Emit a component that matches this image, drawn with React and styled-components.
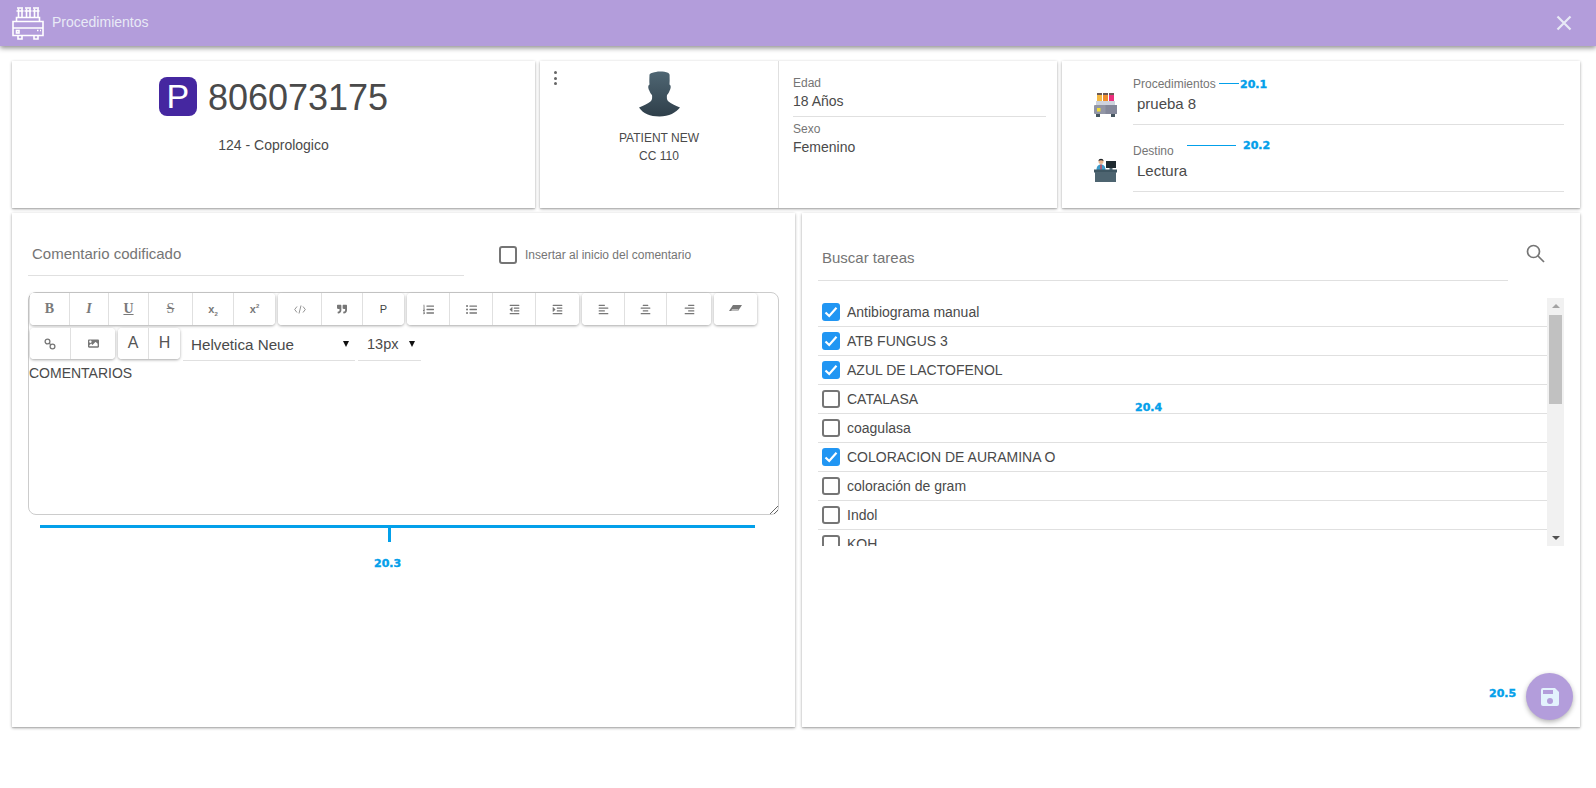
import React from 'react';
import styled, { createGlobalStyle } from 'styled-components';
import { FaQuoteRight, FaListOl, FaListUl, FaOutdent, FaIndent, FaAlignLeft, FaAlignCenter, FaAlignRight, FaImage } from 'react-icons/fa';

const Global = createGlobalStyle`
  html, body { margin: 0; padding: 0; background: #fff; overflow: hidden; }
  body { font-family: "Liberation Sans", Arial, sans-serif; color: #4a4a4a; }
  * { box-sizing: border-box; }
`;

const Page = styled.div`position: relative; width: 1596px; height: 788px; overflow: hidden;`;

const TopBar = styled.header`
  height: 46px; background: #b39ddb; display: flex; align-items: center;
  padding: 0 24px 0 12px; gap: 8px; color: #e8eaf6; font-size: 14px;
  box-shadow: 0 2px 5px rgba(0,0,0,.45);
  position: relative;
`;
const TopTitle = styled.div`flex: 1; margin-top: -3px;`;

const TopRow = styled.div`display: flex; gap: 5px; padding: 15px 16px 0 12px; height: 162px;`;
const BottomRow = styled.div`display: flex; gap: 7px; padding: 5px 16px 0 12px; height: 519px;`;

const Card = styled.section`
  background: #fff;
  box-shadow: 0 1px 3px rgba(0,0,0,.32), 0 1px 1px rgba(0,0,0,.1);
  width: ${p => p.$w ? p.$w + 'px' : 'auto'};
  flex: ${p => p.$w ? 'none' : '1'};
  position: relative;
`;

const OrderCard = styled(Card)`display: flex; flex-direction: column; align-items: center; padding-top: 11px;`;
const OrderLine = styled.div`display: flex; align-items: center; gap: 11px;`;
const Badge = styled.div`
  width: 38px; height: 39px; border-radius: 8px; background: #4527a0; color: #fff;
  display: flex; align-items: center; justify-content: center; font-size: 34px; line-height: 1;
`;
const OrderNo = styled.div`font-size: 36px; line-height: 44px; margin-top: 4px; color: #4a4a4a;`;
const OrderName = styled.div`font-size: 14px; line-height: 18px; margin-top: 16px; color: #4a4a4a;`;

const PatientCard = styled(Card)`display: flex;`;
const PatientLeft = styled.div`
  width: 239px; border-right: 1px solid #e0e0e0; display: flex; flex-direction: column;
  align-items: center; padding-top: 10px; position: relative;
`;
const MoreDots = styled.div`
  position: absolute; left: 14px; top: 10px; width: 4px; display: flex; flex-direction: column; gap: 2.5px;
  span { width: 3px; height: 3px; border-radius: 50%; background: #666; display: block; }
`;
const PatientName = styled.div`font-size: 12px; line-height: 18px; margin-top: 11px; color: #4a4a4a;`;
const PatientId = styled.div`font-size: 12px; line-height: 18px; color: #4a4a4a;`;
const PatientRight = styled.div`flex: 1; padding: 15px 11px 0 14px;`;
const Label = styled.div`font-size: 12px; line-height: 14px; color: #757575;`;
const Value = styled.div`
  font-size: ${p => p.$size ?? 14}px; line-height: 20px; color: #4a4a4a;
  margin-top: ${p => p.$mt ?? 1}px; padding-left: ${p => p.$pl ?? 0}px;
`;
const Info = styled.div`
  padding-top: ${p => p.$pt ?? 0}px; padding-bottom: ${p => p.$pb ?? 0}px;
  border-bottom: ${p => p.$line ? '1px solid #e0e0e0' : 'none'};
`;

const ProcCard = styled(Card)`padding-left: 32px; padding-right: 16px;`;
const ProcRow = styled.div`display: flex; gap: 15px;`;
const ProcIcon = styled.div`width: 24px; align-self: flex-end; padding-bottom: ${p => p.$pb}px; line-height: 0;`;
const ProcText = styled.div`
  flex: 1; border-bottom: 1px solid #e0e0e0; padding-top: ${p => p.$pt}px; padding-bottom: 10px;
`;

const LeftPanel = styled(Card)`padding: 0 16px;`;
const LeftHeader = styled.div`display: flex; height: 63px;`;
const Field = styled.div`
  width: 436px; border-bottom: 1px solid #e0e0e0; color: #757575; font-size: 15px; line-height: 20px;
  display: flex; align-items: flex-end; padding: 0 0 11px 4px;
`;
const CheckLabel = styled.label`
  display: flex; align-items: center; gap: 8px; font-size: 12px; color: #757575;
  align-self: flex-end; margin: 0 0 12px 35px;
`;
const Box = styled.span`
  width: 18px; height: 18px; border-radius: 3px; flex: none; display: flex; align-items: center; justify-content: center;
  background: ${p => p.$on ? '#2196f3' : 'transparent'};
  border: ${p => p.$on ? 'none' : '2px solid #757575'};
`;

const Editor = styled.div`
  margin-top: 16px; height: 223px; width: 751px; border: 1px solid #ccc; border-radius: 8px;
  position: relative; padding: 0 1px;
`;
const ToolRow = styled.div`display: flex; gap: 3px; height: ${p => p.$h}px; margin-bottom: 3px;`;
const Group = styled.div`
  display: flex; background: #fff; border-radius: 4px; box-shadow: 0 1px 3px rgba(0,0,0,.35); overflow: hidden;
`;
const Tool = styled.button`
  width: ${p => p.$w}px; height: 100%; border: 0; padding: 0; background: #fff; color: #777; font-size: 12px;
  border-right: 1px solid #e0e0e0; display: flex; align-items: center; justify-content: center;
  &:last-child { border-right: 0; }
`;
const SerifGlyph = styled.span`
  font-family: "Liberation Serif", serif; font-size: 14px; color: #7a7a7a;
  font-weight: ${p => p.$bold ? 700 : 400}; font-style: ${p => p.$italic ? 'italic' : 'normal'};
  text-decoration: ${p => p.$deco || 'none'};
`;
const SmallX = styled.span`
  font-size: 11px; font-weight: 700; color: #777; font-family: "Liberation Sans", sans-serif;
  sub, sup { font-size: 6px; line-height: 0; }
`;
const LetterTool = styled(Tool)`font-size: 16px; color: #555; padding-bottom: 2px;`;
const PTool = styled(Tool)`font-size: 11px; font-family: "Liberation Sans", sans-serif; color: #444;`;
const Select = styled.div`
  width: ${p => p.$w}px; height: 33px; border-bottom: 1px solid #e0e0e0; display: flex; align-items: center;
  justify-content: space-between; font-size: ${p => p.$size}px; color: #4a4a4a; padding: 0 ${p => p.$pr}px 0 ${p => p.$pl}px;
`;
const Caret = styled.span`width: 0; height: 0; border-left: 3px solid transparent; border-right: 3px solid transparent; border-top: 6px solid #111; display: block;`;
const EditorText = styled.div`font-size: 14px; line-height: 18px; color: #4a4a4a; margin: 5px 0 0 -1px;`;
const Grip = styled.svg`position: absolute; right: 0; bottom: 0;`;

const RightPanel = styled(Card)`padding: 0 16px;`;
const SearchRow = styled.div`display: flex; height: 68px; position: relative;`;
const SearchField = styled.div`
  width: 690px; border-bottom: 1px solid #e0e0e0; font-size: 15px; color: #757575; line-height: 20px;
  display: flex; align-items: flex-end; padding: 0 0 12px 4px;
`;
const SearchBtn = styled.div`margin: 31px 0 0 18px; line-height: 0;`;
const ListWrap = styled.div`display: flex; height: 248px; margin-top: 17px; width: 746px;`;
const List = styled.div`flex: 1; overflow: hidden;`;
const Row = styled.div`
  height: 29px; border-bottom: 1px solid #e0e0e0; display: flex; align-items: center; gap: 7px; padding: 0 0 0 4px;
  font-size: 14px; color: #4a4a4a;
`;
const ScrollTrack = styled.div`
  width: 17px; background: #f1f1f1; display: flex; flex-direction: column; align-items: center; padding: 6px 0;
`;
const Thumb = styled.div`width: 13px; height: 89px; background: #c1c1c1; margin-top: 7px;`;
const ArrowUp = styled.span`width: 0; height: 0; border-left: 4px solid transparent; border-right: 4px solid transparent; border-bottom: 4px solid #a3a3a3;`;
const ArrowDown = styled.span`width: 0; height: 0; border-left: 4px solid transparent; border-right: 4px solid transparent; border-top: 4px solid #505050; margin-top: auto;`;

const Fab = styled.button`
  position: absolute; left: 1526px; top: 673px; width: 47px; height: 47px; border-radius: 50%; border: 0; padding: 0;
  background: #b39ddb; box-shadow: 0 2px 5px rgba(0,0,0,.3); display: flex; align-items: center; justify-content: center;
`;

const Note = styled.div`
  position: absolute; left: ${p => p.$x}px; top: ${p => p.$y}px; color: #03a0ea;
  font-family: "DejaVu Sans", sans-serif; font-weight: 700; font-size: 11px; line-height: 13px;
  -webkit-text-stroke: .4px #03a0ea;
`;
const Stroke = styled.div`
  position: absolute; left: ${p => p.$x}px; top: ${p => p.$y}px; width: ${p => p.$w}px; height: ${p => p.$h}px; background: #03a0ea;
`;

const Analyzer = () => (
  <svg width="32" height="33" viewBox="0 0 32 33" fill="none" stroke="#fff" strokeWidth="1.6">
    <path d="M1 14.500h30v14H1zM4.500 14.500v-4h23v4" />
    <path d="M1 21h30M6 28.500v3.500h4v-3.500M22 28.500v3.500h4v-3.500" />
    <rect x="4.500" y="23.500" width="2.500" height="2.500" />
    <path d="M25 23.500h1.500M28 23.500h1" />
    <path d="M6.500 10.500V1.500M10 10.500V1.500M14.500 10.500V1.500M18 10.500V1.500M22.500 10.500V1.500M26 10.500V1.500" />
    <path d="M4.500 4h7M12.500 4h7M20.500 4h7M5 1h6M13 1h6M21 1h6" />
  </svg>
);

const Avatar = () => (
  <svg width="41" height="47" viewBox="0 0 41 47">
    <defs><linearGradient id="av" x1="0" y1="0" x2="0" y2="1"><stop offset="0" stopColor="#4f6673" /><stop offset="1" stopColor="#2f3f4a" /></linearGradient></defs>
    <path fill="url(#av)" d="M10.500 3.500C12 1.500 15 1.500 17 1c3-.8 9-.5 12 .8 1.500.7 1.800 2 1.600 4 0 2.500.2 5-.1 7.700 1.800.8 1.400 4 .2 6-.8 2.200-1.800 3.500-2.700 4.500-.3 2.500-.3 5 1.500 6.500 2.500 2 6.500 4 11.500 6-4 5-11 9-20.500 9S4 42.500 0 36.500c5-2 9-4 11.500-6 1.800-1.500 1.800-4 1.500-6.500-1-1-1.900-2.300-2.700-4.500-1.200-2-1.600-5.200.2-6-.3-2.700-.1-6.700 0-10z" />
  </svg>
);

const ProcMachine = () => (
  <svg width="23" height="24" viewBox="0 0 23 24">
    <rect x="3" y="1" width="5" height="8" fill="#f4b942" /><rect x="9" y="1" width="5" height="8" fill="#ef8e2b" /><rect x="15" y="1" width="5" height="8" fill="#ec2f7d" />
    <rect x="3" y="0" width="5" height="2" fill="#6d5a55" /><rect x="9" y="0" width="5" height="2" fill="#6d5a55" /><rect x="15" y="0" width="5" height="2" fill="#6d5a55" />
    <rect x="2" y="8" width="19" height="5" fill="#ced3de" />
    <rect x="0" y="12" width="23" height="9" rx="1" fill="#9296a6" /><rect x="11.500" y="12" width="11.500" height="9" fill="#84889a" />
    <rect x="3" y="15" width="3.500" height="3.500" fill="#f2dd3a" />
    <rect x="2" y="21" width="4" height="3" fill="#46555f" /><rect x="17" y="21" width="4" height="3" fill="#46555f" />
  </svg>
);

const ReceptionDesk = () => (
  <svg width="23" height="24" viewBox="0 0 23 24">
    <circle cx="7" cy="3.500" r="2.500" fill="#e9b48e" /><path d="M4.500 3c0-3 5-3 5 0-1.500-1-3.500-1-5 0z" fill="#1f2429" />
    <path d="M2.500 12c0-4 2-5.500 4.500-5.500S11.500 8 11.500 12z" fill="#3d9bca" /><rect x="6.300" y="6.500" width="1.400" height="5" fill="#d8414f" />
    <rect x="12" y="3" width="10" height="7" fill="#1f2a30" /><rect x="15.500" y="10" width="3" height="2" fill="#4d6470" />
    <rect x="0" y="11.500" width="23" height="3" fill="#3e5662" /><rect x="1" y="14" width="21" height="10" fill="#4d6470" />
  </svg>
);

const CheckMark = () => (
  <svg width="14" height="12" viewBox="0 0 14 12" fill="none" stroke="#fff" strokeWidth="2.200"><path d="M1.500 6.500l3.700 3.500L12.500 1.800" /></svg>
);

const CodeIcon = () => (
  <svg width="12" height="9" viewBox="0 0 12 9" fill="none" stroke="#888" strokeWidth=".9"><path d="M3 1.500L.7 4.500 3 7.500M9 1.500l2.300 3L9 7.500M7 .5L5 8.500" /></svg>
);
const LinkIcon = () => (
  <svg width="12" height="12" viewBox="0 0 12 12" fill="none" stroke="#777" strokeWidth="1.300"><circle cx="3.500" cy="3.500" r="2.400" /><circle cx="8.500" cy="8.500" r="2.400" /><path d="M5 5l2 2" /></svg>
);
const EraserIcon = () => (
  <svg width="13" height="8" viewBox="0 0 13 8"><path fill="#777" d="M4 0h9L9 6H0z" /><path fill="#fff" d="M3 4.500h6.500L9 5.500H2.200z" /></svg>
);

const tasks = [
  ['Antibiograma manual', true], ['ATB FUNGUS 3', true], ['AZUL DE LACTOFENOL', true], ['CATALASA', false],
  ['coagulasa', false], ['COLORACION DE AURAMINA O', true], ['coloración de gram', false], ['Indol', false], ['KOH', false],
];

export default function App() {
  return (
    <Page>
      <Global />
      <TopBar>
        <Analyzer />
        <TopTitle>Procedimientos</TopTitle>
        <svg width="16" height="16" viewBox="0 0 16 16" stroke="#e8eaf6" strokeWidth="2.200"><path d="M1.500 1.500l13 13M14.500 1.500l-13 13" /></svg>
      </TopBar>

      <TopRow>
        <OrderCard $w={523}>
          <OrderLine>
            <Badge>P</Badge>
            <OrderNo>806073175</OrderNo>
          </OrderLine>
          <OrderName>124 - Coprologico</OrderName>
        </OrderCard>

        <PatientCard $w={517}>
          <PatientLeft>
            <MoreDots><span /><span /><span /></MoreDots>
            <Avatar />
            <PatientName>PATIENT NEW</PatientName>
            <PatientId>CC 110</PatientId>
          </PatientLeft>
          <PatientRight>
            <Info $line $pb={5}>
              <Label>Edad</Label>
              <Value>18 Años</Value>
            </Info>
            <Info $pt={5}>
              <Label>Sexo</Label>
              <Value>Femenino</Value>
            </Info>
          </PatientRight>
        </PatientCard>

        <ProcCard>
          <ProcRow>
            <ProcIcon $pb={8}><ProcMachine /></ProcIcon>
            <ProcText $pt={16}>
              <Label>Procedimientos</Label>
              <Value $mt={3} $pl={4} $size={15}>prueba 8</Value>
            </ProcText>
          </ProcRow>
          <ProcRow>
            <ProcIcon $pb={10}><ReceptionDesk /></ProcIcon>
            <ProcText $pt={19}>
              <Label>Destino</Label>
              <Value $mt={3} $pl={4} $size={15}>Lectura</Value>
            </ProcText>
          </ProcRow>
        </ProcCard>
      </TopRow>

      <BottomRow>
        <LeftPanel $w={783}>
          <LeftHeader>
            <Field>Comentario codificado</Field>
            <CheckLabel><Box />Insertar al inicio del comentario</CheckLabel>
          </LeftHeader>
          <Editor>
            <ToolRow $h={32}>
              <Group>
                <Tool $w={40}><SerifGlyph $bold>B</SerifGlyph></Tool>
                <Tool $w={39}><SerifGlyph $italic $bold>I</SerifGlyph></Tool>
                <Tool $w={40}><SerifGlyph $bold $deco="underline">U</SerifGlyph></Tool>
                <Tool $w={44}><SerifGlyph $deco="line-through">S</SerifGlyph></Tool>
                <Tool $w={41}><SmallX>x<sub>2</sub></SmallX></Tool>
                <Tool $w={41}><SmallX>x<sup>2</sup></SmallX></Tool>
              </Group>
              <Group>
                <Tool $w={44}><CodeIcon /></Tool>
                <Tool $w={41}><FaQuoteRight size={10} /></Tool>
                <PTool $w={41}>P</PTool>
              </Group>
              <Group>
                <Tool $w={43}><FaListOl size={11} /></Tool>
                <Tool $w={43}><FaListUl size={11} /></Tool>
                <Tool $w={43}><FaOutdent size={11} /></Tool>
                <Tool $w={43}><FaIndent size={11} /></Tool>
              </Group>
              <Group>
                <Tool $w={43}><FaAlignLeft size={11} /></Tool>
                <Tool $w={42}><FaAlignCenter size={11} /></Tool>
                <Tool $w={44}><FaAlignRight size={11} /></Tool>
              </Group>
              <Group>
                <Tool $w={43}><EraserIcon /></Tool>
              </Group>
            </ToolRow>
            <ToolRow $h={31}>
              <Group>
                <Tool $w={41}><LinkIcon /></Tool>
                <Tool $w={44}><FaImage size={11} /></Tool>
              </Group>
              <Group>
                <LetterTool $w={31}>A</LetterTool>
                <LetterTool $w={31}>H</LetterTool>
              </Group>
              <Select $w={172} $pl={8} $pr={6} $size={15.2}>Helvetica Neue<Caret /></Select>
              <Select $w={63} $pl={9} $pr={6} $size={14.5}>13px<Caret /></Select>
            </ToolRow>
            <EditorText>COMENTARIOS</EditorText>
            <Grip width="8" height="8" viewBox="0 0 8 8" stroke="#666" strokeWidth="1"><path d="M8 0L0 8M8 4L4 8" /></Grip>
          </Editor>
        </LeftPanel>

        <RightPanel>
          <SearchRow>
            <SearchField>Buscar tareas</SearchField>
            <SearchBtn>
              <svg width="19" height="19" viewBox="0 0 19 19" fill="none" stroke="#757575" strokeWidth="1.700"><circle cx="7.500" cy="7.500" r="6" /><path d="M12 12l6 6" /></svg>
            </SearchBtn>
          </SearchRow>
          <ListWrap>
            <List>
              {tasks.map(([name, on]) => (
                <Row key={name}>
                  <Box $on={on}>{on && <CheckMark />}</Box>
                  {name}
                </Row>
              ))}
            </List>
            <ScrollTrack>
              <ArrowUp />
              <Thumb />
              <ArrowDown />
            </ScrollTrack>
          </ListWrap>
        </RightPanel>
      </BottomRow>

      <Stroke $x={1219} $y={83} $w={20} $h={1} />
      <Note $x={1240} $y={78}>20.1</Note>
      <Stroke $x={1187} $y={145} $w={49} $h={1} />
      <Note $x={1243} $y={139}>20.2</Note>
      <Stroke $x={40} $y={525} $w={715} $h={3} />
      <Stroke $x={388} $y={528} $w={3} $h={14} />
      <Note $x={374} $y={557}>20.3</Note>
      <Note $x={1135} $y={401}>20.4</Note>
      <Note $x={1489} $y={687}>20.5</Note>
      <Fab>
        <svg width="24" height="24" viewBox="0 0 24 24"><path fill="#e3f2fd" d="M17 3H5a2 2 0 0 0-2 2v14a2 2 0 0 0 2 2h14a2 2 0 0 0 2-2V7l-4-4zm-5 16a3 3 0 1 1 0-6 3 3 0 0 1 0 6zm3-10H5V5h10v4z" /></svg>
      </Fab>
    </Page>
  );
}
